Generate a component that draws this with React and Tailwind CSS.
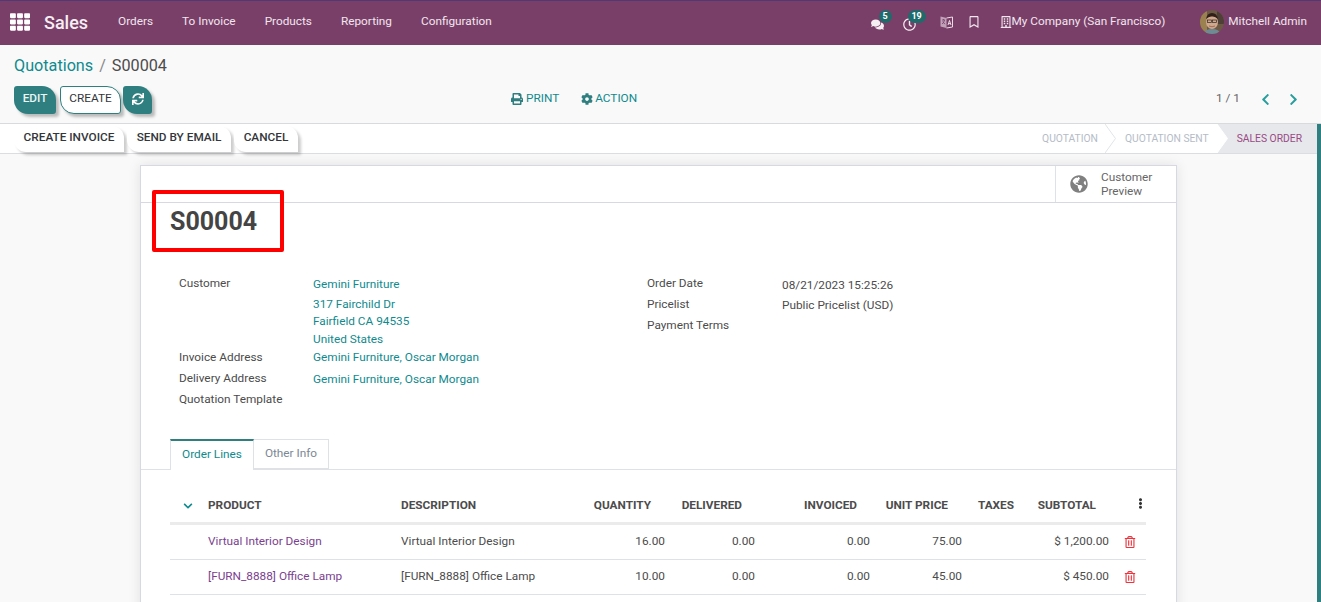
import React from "react";
import {
  FaTh, FaComments, FaRegClock, FaRegBookmark, FaRegBuilding,
  FaSync, FaPrint, FaCog, FaChevronLeft, FaChevronRight, FaGlobeAmericas,
  FaChevronDown, FaEllipsisV, FaRegTrashAlt,
} from "react-icons/fa";

const COLS = "grid grid-cols-[30px_193px_187px_93px_90px_115px_92px_52px_95px_29px]";

function NavLink({ children, className = "" }) {
  return <span className={`text-[11.8px] text-[#f0e6ee] ${className}`}>{children}</span>;
}

function Badge({ children, className = "" }) {
  return (
    <span className={`absolute -top-[6px] h-[13px] rounded-full bg-[#1f6b6b] text-white text-[9px] font-bold leading-[13px] text-center ${className}`}>
      {children}
    </span>
  );
}

function ShadowBtn({ children, className = "" }) {
  return (
    <button className={`h-[28px] pb-[2px] rounded-tr-[14px] rounded-bl-[14px] rounded-tl-[3px] rounded-br-[3px] text-[11.8px] shadow-[3px_3px_3px_rgba(0,0,0,0.25)] ${className}`}>
      {children}
    </button>
  );
}

function StatusBtn({ children, className = "" }) {
  return (
    <button className={`h-[26px] pb-[2px] bg-white rounded-tr-[12px] rounded-bl-[12px] text-[11.8px] font-medium text-[#33363a] shadow-[3px_3px_3px_rgba(0,0,0,0.2)] ${className}`}>
      {children}
    </button>
  );
}

function Arrow({ stroke }) {
  return (
    <svg width="11" height="29" viewBox="0 0 11 29" className="shrink-0">
      <path d="M0 0 L10.5 14.5 L0 29 Z" fill="#ffffff" />
      <path d="M0 0 L10.5 14.5 L0 29" fill="none" stroke={stroke} strokeWidth="1" />
    </svg>
  );
}

function Label({ children, className = "" }) {
  return <div className={`text-[11.8px] leading-[18px] text-[#4c4c4c] ${className}`}>{children}</div>;
}

function Val({ children, className = "" }) {
  return <div className={`text-[11.8px] leading-[18px] text-[#0f8a8e] ${className}`}>{children}</div>;
}

function Head({ children, right, pr = "" }) {
  return (
    <div className={`flex items-center text-[11.8px] font-bold text-[#4c4c4c] ${right ? "justify-end" : "pl-2"} ${pr}`}>
      {children}
    </div>
  );
}

function Num({ children }) {
  return <div className="flex items-center justify-end pr-2 text-[11.8px] text-[#4c4c4c]">{children}</div>;
}

function Row({ product, qty, delivered, invoiced, price, subtotal, className = "" }) {
  return (
    <div className={`${COLS} border-b border-[#dee2e6] ${className}`}>
      <div />
      <div className="flex items-center pl-2 text-[11.8px] text-[#7c3f8f]">{product}</div>
      <div className="flex items-center pl-2 text-[11.8px] text-[#4c4c4c]">{product}</div>
      <Num>{qty}</Num>
      <Num>{delivered}</Num>
      <Num>{invoiced}</Num>
      <Num>{price}</Num>
      <div />
      <Num>{subtotal}</Num>
      <div className="flex items-center justify-start pl-[7px]">
        <FaRegTrashAlt className="text-[12px] text-[#f0323c]" />
      </div>
    </div>
  );
}

function Avatar() {
  return (
    <svg width="24" height="24" viewBox="0 0 24 24" className="rounded-full shrink-0">
      <rect width="24" height="24" fill="#6d5a44" />
      <rect x="0" y="0" width="7" height="24" fill="#9c8150" />
      <rect x="17" y="0" width="7" height="14" fill="#4e4036" />
      <ellipse cx="12" cy="12" rx="6" ry="7" fill="#d2a88c" />
      <path d="M6 9 Q7 3 12 3 Q17 3 18 9 Q15 6 12 6.5 Q9 6 6 9Z" fill="#2e2018" />
      <rect x="7.5" y="10" width="4" height="2.4" fill="none" stroke="#2a2a2a" strokeWidth=".7" />
      <rect x="12.5" y="10" width="4" height="2.4" fill="none" stroke="#2a2a2a" strokeWidth=".7" />
      <path d="M9 16 Q12 17.5 15 16" fill="none" stroke="#8f5f50" strokeWidth=".8" />
      <path d="M3 24 Q5 19 12 19 Q19 19 21 24Z" fill="#6f8a94" />
    </svg>
  );
}

function LanguageIcon({ className = "" }) {
  return (
    <svg width="13" height="14" viewBox="0 0 13 14" className={className}>
      <path d="M0.5 1.5 L6.5 3 V13 L0.5 11.5 Z" fill="#d9c6d4" fillOpacity="0.75" />
      <path d="M6.5 3 L12.5 2 V12 L6.5 13" fill="none" stroke="#e9dce6" strokeWidth="1" />
      <path d="M2 5 H5 M3.5 4 V5 M4.5 5 Q4 8 2 9 M2.8 6.5 Q3.5 8.5 5.2 9" fill="none" stroke="#7a3f68" strokeWidth=".8" />
      <path d="M8 10 L9.5 5.5 L11 10 M8.5 8.6 H10.5" fill="none" stroke="#f0e6ee" strokeWidth=".9" />
    </svg>
  );
}

export default function App() {
  return (
    <div className="h-[602px] overflow-hidden flex flex-col bg-[#f9f9f9] font-['Roboto',sans-serif] relative">
      {/* navbar */}
      <header className="h-[45px] shrink-0 bg-[#7a3f68] border-t border-[#4f3a73] pb-[2px] flex items-center text-white">
        <FaTh className="ml-[10px] text-[20px] text-white" />
        <span className="ml-[14px] text-[18px] font-medium text-[#f5eef3]">Sales</span>
        <NavLink className="ml-[30px]">Orders</NavLink>
        <NavLink className="ml-[29px]">To Invoice</NavLink>
        <NavLink className="ml-[29px]">Products</NavLink>
        <NavLink className="ml-[29px]">Reporting</NavLink>
        <NavLink className="ml-[29px]">Configuration</NavLink>
        <div className="ml-auto flex items-center">
          <span className="relative">
            <FaComments className="text-[13px] text-[#f5eef3] translate-y-[2px]" />
            <Badge className="left-[8px] w-[13px]">5</Badge>
          </span>
          <span className="relative ml-[19px]">
            <FaRegClock className="text-[13px] text-[#f5eef3] translate-y-[2px]" />
            <Badge className="left-[5px] w-[18px]">19</Badge>
          </span>
          <LanguageIcon className="ml-[24px]" />
          <FaRegBookmark className="ml-[15px] text-[12px] text-[#f0e6ee]" />
          <FaRegBuilding className="ml-[20px] text-[12px] text-[#f0e6ee]" />
          <NavLink>My Company (San Francisco)</NavLink>
          <span className="ml-[35px] flex items-center">
            <Avatar />
            <NavLink className="ml-[4px]">Mitchell Admin</NavLink>
          </span>
          <span className="w-[14px]" />
        </div>
      </header>

      {/* control panel */}
      <section className="h-[79px] shrink-0 border-b border-[#d8dadd] px-[14px] flex flex-col">
        <div className="mt-[9px] text-[16.2px] leading-[24px] text-[#4c4c4c]">
          <span className="text-[#0f8a8e]">Quotations</span>
          <span className="text-[#888] mx-[6px]">/</span>
          <span>S00004</span>
        </div>
        <div className="mt-[8px] flex items-center">
          <div className="flex items-center w-[497px]">
            <ShadowBtn className="w-[42px] bg-[#2f7f80] text-[#eaf6f6] font-medium">EDIT</ShadowBtn>
            <ShadowBtn className="ml-[4px] w-[61px] bg-white border border-[#2f7f80] text-[#33363a]">CREATE</ShadowBtn>
            <ShadowBtn className="ml-[2px] w-[29px] bg-[#2f7f80] text-white flex items-center justify-center">
              <FaSync className="text-[12px]" />
            </ShadowBtn>
          </div>
          <span className="flex items-center pb-[2px] text-[11.8px] text-[#0f8a8e]">
            <FaPrint className="text-[12px] text-[#2f7f80] mr-[3px]" />PRINT
          </span>
          <span className="ml-[22px] flex items-center pb-[2px] text-[11.8px] text-[#0f8a8e]">
            <FaCog className="text-[12px] text-[#2f7f80] mr-[2px]" />ACTION
          </span>
          <span className="ml-auto pb-[2px] text-[11.8px] text-[#666]">1 / 1</span>
          <FaChevronLeft className="ml-[19px] mb-[2px] text-[13px] text-[#2a9d9d]" />
          <FaChevronRight className="ml-[15px] mb-[2px] mr-[7px] text-[13px] text-[#2a9d9d]" />
        </div>
      </section>

      {/* status bar */}
      <section className="h-[30px] shrink-0 bg-white border-b border-[#dcdde0] flex items-center pl-[14px]">
        <StatusBtn className="w-[110px]">CREATE INVOICE</StatusBtn>
        <StatusBtn className="w-[104px] ml-[3px]">SEND BY EMAIL</StatusBtn>
        <StatusBtn className="w-[64px] ml-[3px]">CANCEL</StatusBtn>
        <div className="ml-auto h-full flex items-center text-[10.3px] text-[#b5bcc7] pr-[4px]">
          <span>QUOTATION</span>
          <span className="ml-[7px]"><Arrow stroke="#e2e4e7" /></span>
          <span className="ml-[9px]">QUOTATION SENT</span>
          <span className="ml-[8px] h-full bg-[#e6e8ec] flex items-center">
            <Arrow stroke="#ffffff" />
            <span className="pl-[9px] pr-[15px] text-[#9a4a85]">SALES ORDER</span>
          </span>
        </div>
      </section>

      {/* sheet */}
      <main className="flex-1 min-h-0 pl-[140px] pt-[11px]">
        <div className="w-[1037px] h-[500px] bg-white border border-[#d8d8e4] shadow-[0_0_12px_rgba(0,0,0,0.1)] relative">
          <div className="h-[37px] border-b border-[#d8d8e4] flex justify-end">
            <div className="w-[121px] border-l border-[#dee2e6] flex items-center pl-[14px]">
              <FaGlobeAmericas className="text-[18px] text-[#808080]" />
              <span className="ml-[13px] text-[11.8px] leading-[14px] text-[#666]">Customer<br />Preview</span>
            </div>
          </div>

          <h1 className="ml-[29px] mt-[1px] text-[25px] leading-[36px] font-bold text-[#444]">S00004</h1>

          <div className="mt-[35px] ml-[38px] flex">
            <div className="w-[134px]">
              <Label className="h-[73px] -mt-[1px]">Customer</Label>
              <Label className="mt-[1px]">Invoice Address</Label>
              <Label className="mt-[3px]">Delivery Address</Label>
              <Label className="mt-[3px]">Quotation Template</Label>
            </div>
            <div className="w-[334px]">
              <Val>Gemini Furniture</Val>
              <Val className="mt-[2px]">317 Fairchild Dr</Val>
              <Val className="-mt-[1px]">Fairfield CA 94535</Val>
              <Val>United States</Val>
              <Val>Gemini Furniture, Oscar Morgan</Val>
              <Val className="mt-[4px]">Gemini Furniture, Oscar Morgan</Val>
            </div>
            <div className="w-[135px]">
              <Label className="-mt-[1px]">Order Date</Label>
              <Label className="mt-[3px]">Pricelist</Label>
              <Label className="mt-[3px]">Payment Terms</Label>
            </div>
            <div>
              <div className="text-[11.8px] leading-[18px] text-[#4c4c4c] mt-[1px]">08/21/2023 15:25:26</div>
              <div className="text-[11.8px] leading-[18px] text-[#4c4c4c] mt-[2px]">Public Pricelist (USD)</div>
            </div>
          </div>

          {/* tabs */}
          <div className="mt-[31px] h-[31px] border-b border-[#dee2e6] pl-[29px] flex">
            <div className="w-[84px] h-[31px] pb-[1px] bg-white border-x border-[#dee2e6] border-t-2 border-t-[#2f7f80] text-[11.8px] text-[#0f8a8e] flex items-center justify-center">Order Lines</div>
            <div className="w-[75px] h-[30px] border border-l-0 border-[#dee2e6] text-[11.8px] text-[#7b8794] flex items-center justify-center">Other Info</div>
          </div>

          {/* table */}
          <div className="ml-[29px] w-[976px] mt-[18px]">
            <div className={`${COLS} h-[37px] pt-[1px] border-b-[3px] border-[#ebebeb]`}>
              <div className="flex items-center justify-center pl-[5px]">
                <FaChevronDown className="text-[10px] text-[#0f8a8e]" />
              </div>
              <Head>PRODUCT</Head>
              <Head>DESCRIPTION</Head>
              <Head right pr="pr-[22px]">QUANTITY</Head>
              <Head right pr="pr-[21px]">DELIVERED</Head>
              <Head right pr="pr-[21px]">INVOICED</Head>
              <Head right pr="pr-[22px]">UNIT PRICE</Head>
              <Head right pr="pr-[8px]">TAXES</Head>
              <Head right pr="pr-[21px]">SUBTOTAL</Head>
              <div className="flex items-start justify-start pl-[18px] pt-[9px]">
                <FaEllipsisV className="text-[11px] text-[#333]" />
              </div>
            </div>
            <Row className="h-[35px]" product="Virtual Interior Design" qty="16.00" delivered="0.00" invoiced="0.00" price="75.00" subtotal="$ 1,200.00" />
            <Row className="h-[35px]" product="[FURN_8888] Office Lamp" qty="10.00" delivered="0.00" invoiced="0.00" price="45.00" subtotal="$ 450.00" />
          </div>

          {/* annotation */}
          <div className="absolute left-[11px] top-[24px] w-[132px] h-[62px] border-[4px] border-[#ff0000] rounded-[2px]" />
        </div>
      </main>

      {/* scrollbar */}
      <div className="absolute right-0 top-[124px] bottom-0 w-[4px] bg-[#2f7f80]" />
    </div>
  );
}
